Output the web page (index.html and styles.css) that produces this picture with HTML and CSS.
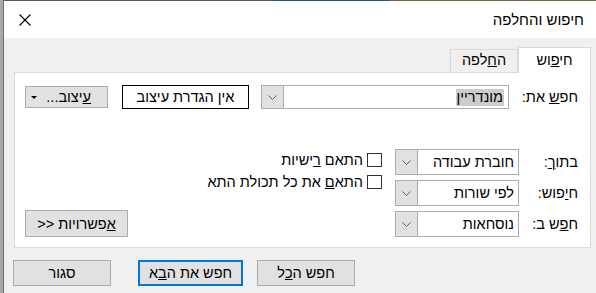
FILE: index.html
```html
<!DOCTYPE html>
<html lang="he" dir="rtl">
<head>
<meta charset="utf-8">
<title>חיפוש והחלפה</title>
<link rel="stylesheet" href="styles.css">
</head>
<body>
<div class="screen">
  <div class="dialog">
    <div class="strip"></div>
    <div class="titlebar">
      <span class="title">חיפוש והחלפה</span>
      <span class="close">
        <svg width="12" height="12" viewBox="0 0 12 12"><path d="M0.5 0.5 L11.5 11.5 M11.5 0.5 L0.5 11.5" stroke="#000" stroke-width="1.1" fill="none"/></svg>
      </span>
    </div>
    <div class="body">
      <div class="tabs">
        <div class="tab active">חי<u>פ</u>וש</div>
        <div class="tab">ה<u>ח</u>לפה</div>
      </div>
      <div class="panel">
        <div class="row1">
          <label class="lbl lbl-wide">חפ<u>ש</u> את:</label>
          <div class="combo combo-wide">
            <span class="combo-text"><span class="sel">מונדריין</span></span>
            <span class="drop"><svg width="9" height="5" viewBox="0 0 9 5"><path d="M0.5 0.5 L4.5 4.5 L8.5 0.5" stroke="#606060" fill="none"/></svg></span>
          </div>
          <div class="fmtbox">אין הגדרת עיצוב</div>
          <div class="btn btn-fmt"><span><u>ע</u>יצוב...</span><span class="tri"></span></div>
        </div>
        <div class="opts">
          <div class="fields">
            <div class="field">
              <label class="lbl">בתו<u>ך</u>:</label>
              <div class="combo"><span class="combo-text">חוברת עבודה</span><span class="drop"><svg width="9" height="5" viewBox="0 0 9 5"><path d="M0.5 0.5 L4.5 4.5 L8.5 0.5" stroke="#606060" fill="none"/></svg></span></div>
            </div>
            <div class="field">
              <label class="lbl">ח<u>י</u>פוש:</label>
              <div class="combo"><span class="combo-text">לפי שורות</span><span class="drop"><svg width="9" height="5" viewBox="0 0 9 5"><path d="M0.5 0.5 L4.5 4.5 L8.5 0.5" stroke="#606060" fill="none"/></svg></span></div>
            </div>
            <div class="field">
              <label class="lbl">ח<u>פ</u>ש ב:</label>
              <div class="combo"><span class="combo-text">נוסחאות</span><span class="drop"><svg width="9" height="5" viewBox="0 0 9 5"><path d="M0.5 0.5 L4.5 4.5 L8.5 0.5" stroke="#606060" fill="none"/></svg></span></div>
            </div>
          </div>
          <div class="checks">
            <div class="check"><span class="box"></span><span>התאם <u>ר</u>ישיות</span></div>
            <div class="check"><span class="box"></span><span>התא<u>ם</u> את כל תכולת התא</span></div>
          </div>
          <div class="more">
            <div class="btn btn-opt"><u>א</u>פשרויות &lt;&lt;</div>
          </div>
        </div>
      </div>
      <div class="buttons">
        <div class="btn btn-foot">חפש ה<u>כ</u>ל</div>
        <div class="btn btn-foot btn-default">חפש את ה<u>ב</u>א</div>
        <div class="btn btn-foot">סגור</div>
      </div>
    </div>
  </div>
</div>
</body>
</html>
```
FILE: styles.css
```css
* { box-sizing: border-box; }
html, body { margin: 0; padding: 0; }
body {
  font-family: "Liberation Sans", "DejaVu Sans", sans-serif;
  font-size: 14.5px;
  color: #000;
  width: 596px;
  height: 293px;
  overflow: hidden;
}
u { text-decoration: underline; text-underline-offset: 1px; text-decoration-thickness: 1px; }

.screen {
  display: flex;
  height: 293px;
  background: #a8a8a8;
  direction: ltr;
}
.dialog {
  direction: rtl;
  margin-left: 3px;
  flex: 1;
  display: flex;
  flex-direction: column;
  border-left: 1px solid #6e6e6e;
  background: #f0f0f0;
}
.strip {
  height: 1px;
  background: linear-gradient(to right,
    #5c5c5c 0, #5c5c5c 269px,
    #1c5d7b 269px, #1c5d7b 386px,
    #7c6b47 386px, #7c6b47 100%);
}
.titlebar {
  height: 37px;
  background: #fff;
  display: flex;
  align-items: center;
  justify-content: space-between;
  padding: 0 12px 0 15px;
}
.title { font-size: 15px; }
.close { display: flex; align-items: center; }

.body {
  flex: 1;
  padding: 9px 5px 0 10px;
}
.tabs {
  display: flex;
  align-items: flex-end;
  height: 25px;
}
.tab {
  height: 23px;
  width: 68px;
  border: 1px solid #d9d9d9;
  border-bottom: none;
  text-align: center;
  line-height: 21px;
  background: #f0f0f0;
  margin-left: -1px;
}
.tab.active {
  height: 26px;
  width: 73px;
  background: #fff;
  position: relative;
  z-index: 1;
  margin-bottom: -1px;
  margin-left: 0;
  line-height: 25px;
}
.panel {
  background: #fff;
  border: 1px solid #d9d9d9;
  height: 176px;
  padding: 12px 12px 0 10px;
  display: flex;
  flex-direction: column;
}
.row1 {
  display: flex;
  align-items: center;
  height: 24px;
}
.lbl { display: block; width: 59px; flex: none; }
.lbl-wide { width: 69px; }

.combo {
  width: 124px;
  height: 26px;
  border: 1px solid #adadad;
  display: flex;
  align-items: center;
  background: #fff;
  flex: none;
}
.combo-wide { width: 248px; height: 24px; }
.combo-text {
  flex: 1;
  padding-right: 4px;
  white-space: nowrap;
  display: flex;
}
.sel { background: #cccccc; padding: 0 1px; line-height: 17px; }
.drop {
  width: 22px;
  height: 100%;
  background: #e1e1e1;
  border-right: 1px solid #adadad;
  display: flex;
  align-items: center;
  justify-content: center;
  flex: none;
}
.fmtbox {
  margin-right: 12px;
  width: 127px;
  height: 24px;
  border: 1px solid #000;
  display: flex;
  align-items: center;
  justify-content: center;
  flex: none;
}
.btn {
  background: #e1e1e1;
  border: 1px solid #adadad;
  display: flex;
  align-items: center;
  justify-content: center;
  flex: none;
}
.btn-fmt {
  margin-right: 14px;
  width: 83px;
  height: 22px;
  justify-content: space-between;
  padding: 0 16px 0 5px;
}
.tri {
  width: 0; height: 0;
  border-left: 3px solid transparent;
  border-right: 3px solid transparent;
  border-top: 3px solid #000;
}
.opts {
  margin-top: 40px;
  display: flex;
  flex: 1;
}
.fields { display: flex; flex-direction: column; gap: 5px; }
.field { display: flex; align-items: center; }
.checks {
  margin-right: 13px;
  padding-top: 4px;
  display: flex;
  flex-direction: column;
  gap: 8px;
  flex: 1;
}
.check { display: flex; align-items: center; gap: 4px; height: 14px; }
.box {
  width: 15px; height: 14px;
  border: 1px solid #333;
  background: #fff;
  flex: none;
}
.more { display: flex; align-items: flex-end; padding-bottom: 10px; }
.btn-opt { width: 103px; height: 27px; }

.buttons {
  display: flex;
  justify-content: flex-end;
  padding-top: 12px;
  margin-left: -1px;
}
.btn-foot { width: 98px; height: 26px; margin-left: 27px; }
.btn-foot:first-child { margin-left: 14px; }
.btn-foot:last-child { margin-left: 0; }
.btn-default { width: 105px; border: 2px solid #0078d7; }
```
